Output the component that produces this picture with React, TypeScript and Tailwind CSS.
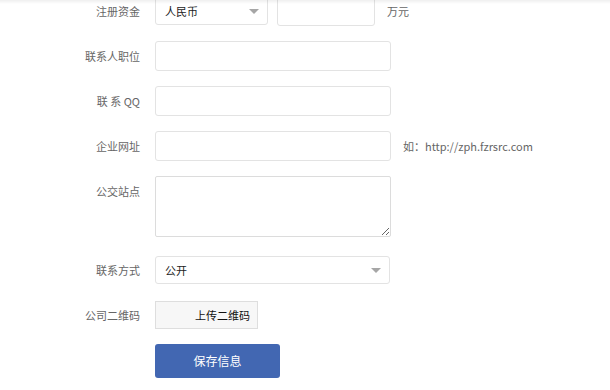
const font = { fontFamily: '"Noto Sans CJK SC", "Noto Sans", sans-serif' };

const Label = ({ children, top }: { children: React.ReactNode; top?: boolean }) => (
  <div
    className={`w-[140px] mr-[15px] shrink-0 text-right text-[11px] text-[#666] leading-[30px] ${top ? 'self-start' : ''}`}
  >
    {children}
  </div>
);

const Caret = () => (
  <span className="w-0 h-0 border-l-[5px] border-r-[5px] border-t-[5px] border-l-transparent border-r-transparent border-t-[#a6a6a6]" />
);

const FakeSelect = ({ value, width }: { value: string; width: string }) => (
  <div
    className={`${width} h-[28px] flex items-center justify-between pl-[9px] pr-[8px] border border-[#e3e3e3] rounded-[3px] bg-white text-[11px] text-[#222]`}
  >
    <span>{value}</span>
    <Caret />
  </div>
);

const Input = ({ width = 'w-[236px]' }: { width?: string }) => (
  <input className={`${width} h-[30px] border border-[#e3e3e3] rounded-[3px] bg-white outline-none px-2 text-[11px]`} />
);

export default function App() {
  return (
    <div className="w-[610px] h-[390px] bg-white overflow-hidden relative" style={font}>
      <div className="absolute top-0 left-0 right-0 h-[4px] bg-gradient-to-b from-[#00000010] to-transparent z-10" />
      <div className="flex flex-col -mt-[4px]">
        <div className="flex items-center h-[30px]">
          <Label>注册资金</Label>
          <FakeSelect value="人民币" width="w-[113px]" />
          <div className="ml-[9px]">
            <Input width="w-[98px]" />
          </div>
          <span className="ml-[12px] text-[11px] text-[#666]">万元</span>
        </div>

        <div className="flex items-center mt-[15px]">
          <Label>联系人职位</Label>
          <Input />
        </div>

        <div className="flex items-center mt-[15px]">
          <Label>联 系 QQ</Label>
          <Input />
        </div>

        <div className="flex items-center mt-[15px]">
          <Label>企业网址</Label>
          <Input />
          <span className="ml-[12px] text-[11px] text-[#666]">如：http://zph.fzrsrc.com</span>
        </div>

        <div className="flex mt-[15px]">
          <Label top>公交站点</Label>
          <textarea className="w-[236px] h-[61px] border border-[#dcdcdc] rounded-[2px] bg-white outline-none p-2 text-[11px]" />
        </div>

        <div className="flex items-center mt-[18px]">
          <Label>联系方式</Label>
          <FakeSelect value="公开" width="w-[235px]" />
        </div>

        <div className="flex items-center mt-[16px] h-[28px]">
          <Label>公司二维码</Label>
          <div className="w-[103px] h-[28px] flex items-center justify-end pr-[7px] border border-[#dedede] bg-[#f7f7f7] text-[11px] text-[#111]">
            上传二维码
          </div>
        </div>

        <div className="flex items-center mt-[15px]">
          <div className="w-[155px] shrink-0" />
          <button className="w-[125px] h-[34px] rounded-[3px] bg-[#4267b2] text-white text-[12px]">保存信息</button>
        </div>
      </div>
    </div>
  );
}
